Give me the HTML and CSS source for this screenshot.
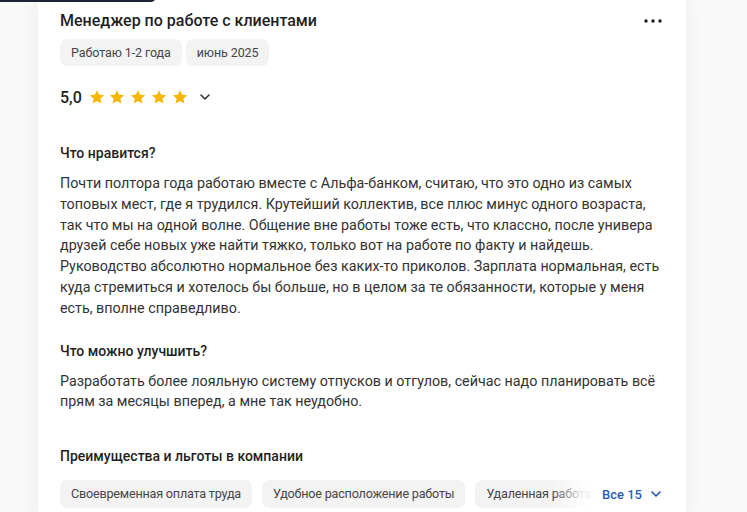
FILE: index.html
```html
<!DOCTYPE html>
<html lang="ru">
<head>
<meta charset="utf-8">
<link rel="stylesheet" href="styles.css">
</head>
<body>
<div class="topbar"></div>
<div class="page">
  <article class="card">
    <header class="head">
      <h2 class="title">Менеджер по работе с клиентами</h2>
      <button class="menu" aria-label="Ещё">
        <svg width="18" height="4" viewBox="0 0 18 4"><circle cx="2" cy="2" r="1.7"/><circle cx="9" cy="2" r="1.7"/><circle cx="16" cy="2" r="1.7"/></svg>
      </button>
    </header>
    <div class="tags">
      <span class="tag">Работаю 1-2 года</span>
      <span class="tag">июнь 2025</span>
    </div>
    <div class="rating">
      <span class="score">5,0</span>
      <span class="stars">
        <svg class="star" viewBox="0 0 24 24"><path d="M12 1.8l3.1 6.9 7.5.8-5.6 5 1.6 7.4L12 18.1l-6.6 3.8L7 14.5l-5.6-5 7.5-.8z"/></svg>
        <svg class="star" viewBox="0 0 24 24"><path d="M12 1.8l3.1 6.9 7.5.8-5.6 5 1.6 7.4L12 18.1l-6.6 3.8L7 14.5l-5.6-5 7.5-.8z"/></svg>
        <svg class="star" viewBox="0 0 24 24"><path d="M12 1.8l3.1 6.9 7.5.8-5.6 5 1.6 7.4L12 18.1l-6.6 3.8L7 14.5l-5.6-5 7.5-.8z"/></svg>
        <svg class="star" viewBox="0 0 24 24"><path d="M12 1.8l3.1 6.9 7.5.8-5.6 5 1.6 7.4L12 18.1l-6.6 3.8L7 14.5l-5.6-5 7.5-.8z"/></svg>
        <svg class="star" viewBox="0 0 24 24"><path d="M12 1.8l3.1 6.9 7.5.8-5.6 5 1.6 7.4L12 18.1l-6.6 3.8L7 14.5l-5.6-5 7.5-.8z"/></svg>
      </span>
      <svg class="chev" width="10" height="6" viewBox="0 0 10 6"><path d="M1 1l4 4 4-4" fill="none" stroke="#333" stroke-width="1.6" stroke-linecap="round" stroke-linejoin="round"/></svg>
    </div>

    <section class="block first">
      <h3 class="sub">Что нравится?</h3>
      <p class="text">Почти полтора года работаю вместе с Альфа-банком, считаю, что это одно из самых топовых мест, где я трудился. Крутейший коллектив, все плюс минус одного возраста, так что мы на одной волне. Общение вне работы тоже есть, что классно, после универа друзей себе новых уже найти тяжко, только вот на работе по факту и найдешь. Руководство абсолютно нормальное без каких-то приколов. Зарплата нормальная, есть куда стремиться и хотелось бы больше, но в целом за те обязанности, которые у меня есть, вполне справедливо.</p>
    </section>

    <section class="block">
      <h3 class="sub">Что можно улучшить?</h3>
      <p class="text">Разработать более лояльную систему отпусков и отгулов, сейчас надо планировать всё прям за месяцы вперед, а мне так неудобно.</p>
    </section>

    <section class="block perks">
      <h3 class="sub">Преимущества и льготы в компании</h3>
      <div class="perk-row">
        <div class="perk-list">
          <span class="perk">Своевременная оплата труда</span>
          <span class="perk">Удобное расположение работы</span>
          <span class="perk">Удаленная работа</span>
          <span class="perk">ДМС</span>
        </div>
        <button class="more">Все 15
          <svg width="10" height="6" viewBox="0 0 10 6"><path d="M1 1l4 4 4-4" fill="none" stroke="#2a5ab8" stroke-width="1.7" stroke-linecap="round" stroke-linejoin="round"/></svg>
        </button>
      </div>
    </section>
  </article>
</div>
</body>
</html>
```
FILE: styles.css
```css
* { box-sizing: border-box; }
html, body { margin: 0; padding: 0; }
body {
  background: #f9f9f9;
  font-family: Roboto, "Liberation Sans", Arial, sans-serif;
  color: #1f1f1f;
  height: 512px;
  overflow: hidden;
  position: relative;
}
.topbar {
  position: absolute;
  left: -10px;
  top: -9px;
  width: 166px;
  height: 11px;
  background: #1c2436;
  border-radius: 8px;
  z-index: 2;
}
.page {
  padding-left: 38px;
}
.card {
  width: 648px;
  background: #fff;
  padding: 9px 22px 0 22px;
  height: 520px;
  box-shadow: 0 0 22px rgba(0, 0, 0, 0.05);
}
.head {
  display: flex;
  align-items: center;
  justify-content: space-between;
}
.title {
  margin: 0;
  font-size: 16px;
  line-height: 24px;
  font-weight: 500;
  color: #1f1f1f;
}
.menu {
  border: 0;
  background: none;
  padding: 0;
  margin-right: 2px;
  display: flex;
  fill: #1a1a1a;
}
.tags {
  display: flex;
  gap: 4px;
  margin-top: 6px;
}
.tag {
  background: #f3f3f4;
  border-radius: 7px;
  padding: 0 11px;
  height: 27px;
  line-height: 27px;
  font-size: 12.5px;
  letter-spacing: -0.1px;
  color: #464646;
}
.rating {
  display: flex;
  align-items: center;
  margin-top: 19px;
  height: 24px;
}
.score {
  font-size: 16px;
  font-weight: 500;
  color: #1f1f1f;
  margin-right: 7px;
}
.stars {
  display: flex;
  gap: 4.7px;
}
.star {
  width: 16px;
  height: 16px;
  fill: #f7b500;
}
.chev {
  margin-left: 12px;
}
.block {
  margin-top: 22px;
}
.block.first {
  margin-top: 34px;
}
.sub {
  margin: 0;
  font-size: 14px;
  line-height: 20px;
  font-weight: 500;
  color: #1f1f1f;
}
.text {
  margin: 10px 0 0;
  font-size: 14.3px;
  line-height: 20.8px;
  color: #333;
}
.perks {
  margin-top: 34px;
}
.perk-row {
  position: relative;
  margin-top: 14px;
  overflow: hidden;
}
.perk-list {
  display: flex;
  gap: 10px;
  white-space: nowrap;
}
.perk {
  background: #f3f3f4;
  border-radius: 7px;
  padding: 0 11px;
  height: 28px;
  line-height: 28px;
  font-size: 12.6px;
  letter-spacing: -0.2px;
  color: #464646;
  flex: none;
}
.more {
  position: absolute;
  right: 0;
  top: 0;
  height: 28px;
  border: 0;
  padding: 0 3px 0 50px;
  background: linear-gradient(to right, rgba(255,255,255,0) 0, rgba(255,255,255,0.85) 30px, #fff 44px);
  display: flex;
  align-items: center;
  gap: 9px;
  font-family: inherit;
  font-size: 13px;
  font-weight: 500;
  color: #2a5ab8;
}
```
